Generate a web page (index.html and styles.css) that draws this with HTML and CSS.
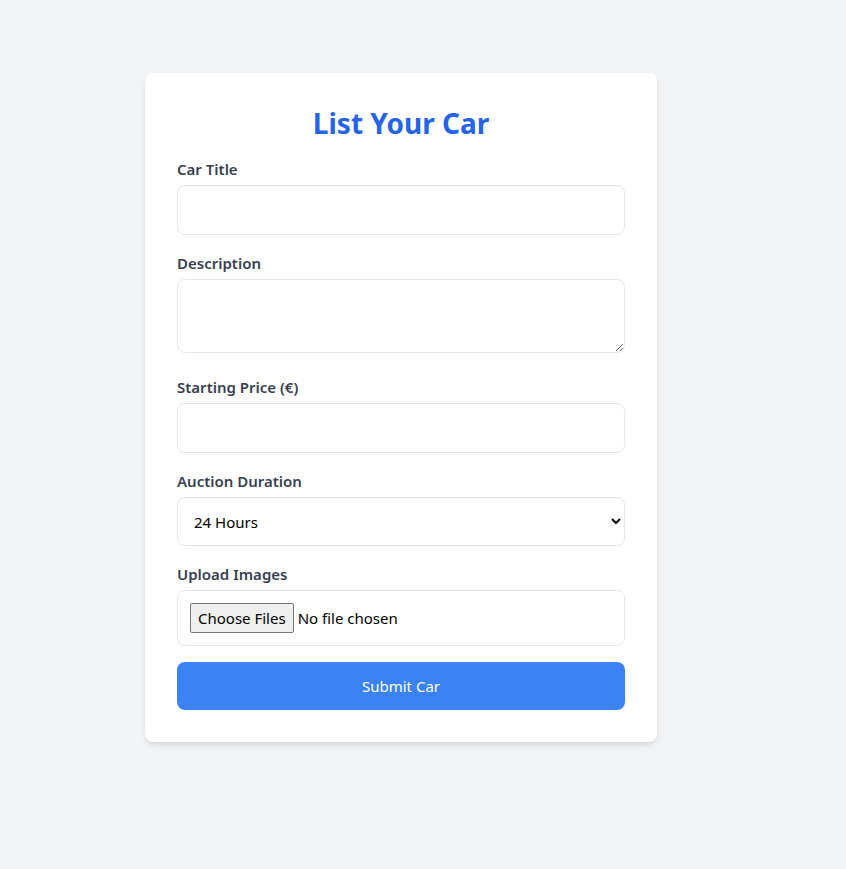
FILE: index.html
```html
<!DOCTYPE html>
<html lang="en">
<head>
<meta charset="utf-8">
<title>List Your Car</title>
<link rel="stylesheet" href="styles.css">
</head>
<body>
<main class="page">
  <form class="card">
    <h1 class="title">List Your Car</h1>
    <div class="field">
      <label class="label" for="title">Car Title</label>
      <input class="control" id="title" type="text">
    </div>
    <div class="field">
      <label class="label" for="desc">Description</label>
      <textarea class="control area" id="desc" rows="2"></textarea>
    </div>
    <div class="field">
      <label class="label" for="price">Starting Price (€)</label>
      <input class="control" id="price" type="number">
    </div>
    <div class="field">
      <label class="label" for="dur">Auction Duration</label>
      <select class="control select" id="dur">
        <option>24 Hours</option>
        <option>48 Hours</option>
        <option>72 Hours</option>
      </select>
    </div>
    <div class="field">
      <label class="label" for="img">Upload Images</label>
      <input class="control file" id="img" type="file" multiple>
    </div>
    <button class="submit" type="button">Submit Car</button>
  </form>
</main>
</body>
</html>
```
FILE: styles.css
```css
* { box-sizing: border-box; }
html, body { margin: 0; }
body {
  background: #f3f4f6;
  font-family: "Noto Sans", "Open Sans", sans-serif;
  min-height: 869px;
}
.page {
  padding: 73px 0 0 145px;
}
.card {
  width: 512px;
  background: #fff;
  border-radius: 8px;
  padding: 32px;
  box-shadow: 0 4px 8px -1px rgba(0,0,0,0.1), 0 2px 4px -2px rgba(0,0,0,0.1);
}
.title {
  margin: 0 0 16px;
  text-align: center;
  color: #2563eb;
  font-size: 28px;
  line-height: 36px;
  font-weight: 700;
}
.field { margin-bottom: 16px; }
.label {
  display: block;
  color: #374151;
  font-size: 15px;
  line-height: 24px;
  font-weight: 600;
  margin-bottom: 4px;
}
.control {
  display: block;
  width: 100%;
  border: 1px solid #e5e7eb;
  border-radius: 8px;
  padding: 12px;
  font-size: 16px;
  line-height: 24px;
  height: 50px;
  background: #fff;
  font-family: "Liberation Sans", Arial, sans-serif;
  outline: none;
}
.area { height: 74px; margin-bottom: 22px; resize: vertical; }
.field:has(.area) { margin-bottom: 0; }
.select { height: 49px; padding: 0 12px; color: #000; font-family: "Noto Sans", sans-serif; font-size: 15px; }
.file { height: 56px; padding: 12px; font-family: "Noto Sans", sans-serif; font-size: 15px; line-height: 30px; }
.file::file-selector-button {
  font-family: "Noto Sans", sans-serif;
  font-size: 15px;
  height: 30px;
  padding: 0 7px;
  margin-right: 4px;
  border: 1px solid #767676;
  border-radius: 2px;
  background: #efefef;
  color: #000;
}
.submit {
  display: block;
  width: 100%;
  height: 48px;
  border: none;
  border-radius: 8px;
  background: #3b82f6;
  color: #fff;
  font-family: "Noto Sans", sans-serif;
  font-size: 15px;
}
```
